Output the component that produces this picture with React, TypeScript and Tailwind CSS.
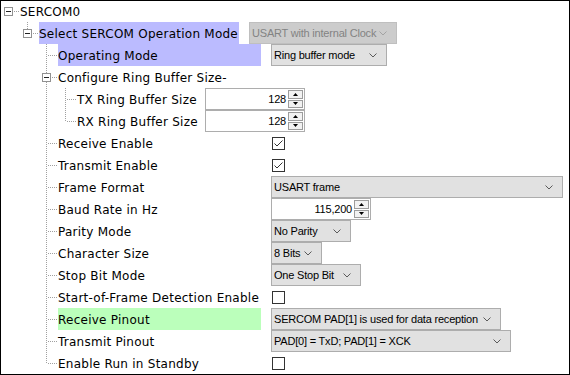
import React from "react";

type Ctrl =
  | { kind: "select"; text: string; w: number; disabled?: boolean }
  | { kind: "spin"; text: string; w: number }
  | { kind: "check"; on: boolean };

type Row = {
  label: string;
  level: number;
  open?: boolean;
  last?: boolean;
  pass: boolean[];
  hl?: "blue" | "green";
  lw?: number;
  ctrl?: Ctrl;
};

const rows: Row[] = [
  { label: "SERCOM0", level: 0, open: true, last: true, pass: [] },
  { label: "Select SERCOM Operation Mode", level: 1, open: true, last: true, pass: [false], hl: "blue", lw: 200, ctrl: { kind: "select", text: "USART with internal Clock", w: 148, disabled: true } },
  { label: "Operating Mode", level: 2, pass: [false, false], hl: "blue", lw: 203, ctrl: { kind: "select", text: "Ring buffer mode", w: 116 } },
  { label: "Configure Ring Buffer Size-", level: 2, open: true, pass: [false, false] },
  { label: "TX Ring Buffer Size", level: 3, pass: [false, false, true], lw: 118, ctrl: { kind: "spin", text: "128", w: 100 } },
  { label: "RX Ring Buffer Size", level: 3, last: true, pass: [false, false, true], lw: 118, ctrl: { kind: "spin", text: "128", w: 100 } },
  { label: "Receive Enable", level: 2, pass: [false, false], lw: 203, ctrl: { kind: "check", on: true } },
  { label: "Transmit Enable", level: 2, pass: [false, false], lw: 203, ctrl: { kind: "check", on: true } },
  { label: "Frame Format", level: 2, pass: [false, false], lw: 203, ctrl: { kind: "select", text: "USART frame", w: 292 } },
  { label: "Baud Rate in Hz", level: 2, pass: [false, false], lw: 203, ctrl: { kind: "spin", text: "115,200", w: 100 } },
  { label: "Parity Mode", level: 2, pass: [false, false], lw: 203, ctrl: { kind: "select", text: "No Parity", w: 80 } },
  { label: "Character Size", level: 2, pass: [false, false], lw: 203, ctrl: { kind: "select", text: "8 Bits", w: 51 } },
  { label: "Stop Bit Mode", level: 2, pass: [false, false], lw: 203, ctrl: { kind: "select", text: "One Stop Bit", w: 90 } },
  { label: "Start-of-Frame Detection Enable", level: 2, pass: [false, false], lw: 203, ctrl: { kind: "check", on: false } },
  { label: "Receive Pinout", level: 2, pass: [false, false], hl: "green", lw: 203, ctrl: { kind: "select", text: "SERCOM PAD[1] is used for data reception", w: 230 } },
  { label: "Transmit Pinout", level: 2, pass: [false, false], lw: 203, ctrl: { kind: "select", text: "PAD[0] = TxD; PAD[1] = XCK", w: 240 } },
  { label: "Enable Run in Standby", level: 2, last: true, pass: [false, false], lw: 203, ctrl: { kind: "check", on: false } },
];

const dot = "#a0a0a0";

// one 19px column of the tree guide
function Cell({ type, box, root }: { type: "empty" | "pass" | "tee" | "elbow"; box?: boolean; root?: boolean }) {
  return (
    <svg width="19" height="22" className="shrink-0" shapeRendering="crispEdges">
      {type === "pass" && <line x1="7.5" y1="0" x2="7.5" y2="22" stroke={dot} strokeDasharray="1 1" />}
      {(type === "tee" || type === "elbow") && !root && (
        <line x1="7.5" y1="0" x2="7.5" y2={box ? 7 : 11} stroke={dot} strokeDasharray="1 1" />
      )}
      {type === "tee" && <line x1="7.5" y1={box ? 16 : 12} x2="7.5" y2="22" stroke={dot} strokeDasharray="1 1" />}
      {(type === "tee" || type === "elbow") && (
        <line x1={box ? 13 : 9} y1="11.5" x2="19" y2="11.5" stroke={dot} strokeDasharray="1 1" />
      )}
      {box && (
        <>
          <rect x="3.5" y="7.5" width="8" height="8" fill="white" stroke="#919191" />
          <line x1="5" y1="11.5" x2="10" y2="11.5" stroke="#222" />
        </>
      )}
    </svg>
  );
}

function Chevron({ color = "#5a5a5a" }: { color?: string }) {
  return (
    <svg width="8" height="5" className="shrink-0">
      <polyline points="0.5,0.5 4,4 7.5,0.5" fill="none" stroke={color} strokeWidth="1" />
    </svg>
  );
}

function Select({ text, w, disabled }: { text: string; w: number; disabled?: boolean }) {
  return (
    <div
      style={{ width: w }}
      className={`flex h-[22px] items-center border pl-[2px] pr-[9px] ${
        disabled ? "border-[#bfbfbf] bg-[#cccccc] text-[#838383]" : "border-[#adadad] bg-[#e1e1e1] text-black"
      }`}
    >
      <span className="flex-1 overflow-hidden whitespace-nowrap">{text}</span>
      <Chevron color={disabled ? "#a3a3a3" : "#5a5a5a"} />
    </div>
  );
}

function Spin({ text, w }: { text: string; w: number }) {
  return (
    <div style={{ width: w }} className="flex h-[22px] border border-[#adadad] bg-white">
      <div className="flex flex-1 items-center justify-end pr-[2px]">{text}</div>
      <div className="flex w-[16px] flex-col gap-px py-px pr-px">
        <div className="flex flex-1 items-center justify-center border border-[#9c9c9c] bg-[#f2f2f2]">
          <svg width="5" height="3"><polygon points="2.5,0 5,3 0,3" fill="#000" /></svg>
        </div>
        <div className="flex flex-1 items-center justify-center border border-[#9c9c9c] bg-[#f2f2f2]">
          <svg width="5" height="3"><polygon points="0,0 5,0 2.5,3" fill="#000" /></svg>
        </div>
      </div>
    </div>
  );
}

function Check({ on }: { on: boolean }) {
  return (
    <div className="ml-px flex h-[13px] w-[13px] items-center justify-center border border-[#333] bg-white">
      {on && (
        <svg width="11" height="11">
          <polyline points="1.5,5.5 4,8 9.5,2.5" fill="none" stroke="#333" strokeWidth="1" />
        </svg>
      )}
    </div>
  );
}

export default function App() {
  return (
    <div className="h-[375px] w-[570px] border border-black bg-white font-['DejaVu_Sans',sans-serif] text-[12px] tracking-[0.25px] text-black">
      <div className="-mt-px flex flex-col">
        {rows.map((r, i) => (
          <div key={i} className="flex h-[22px] items-center">
            {r.pass.map((p, k) => (
              <Cell key={k} type={p ? "pass" : "empty"} />
            ))}
            <Cell type={r.last ? "elbow" : "tee"} box={r.open} root={r.level === 0} />
            <div
              style={r.lw ? { width: r.lw } : undefined}
              className={`flex h-full shrink-0 items-center whitespace-nowrap pt-px ${
                r.hl === "blue" ? "bg-[#bbbbff]" : r.hl === "green" ? "bg-[#bbffbb]" : ""
              }`}
            >
              {r.label}
            </div>
            {r.ctrl && (
              <div className="ml-[10px] flex items-center font-['Liberation_Sans',Arial,sans-serif] text-[11px] tracking-[-0.2px]">
                {r.ctrl.kind === "select" && <Select text={r.ctrl.text} w={r.ctrl.w} disabled={r.ctrl.disabled} />}
                {r.ctrl.kind === "spin" && <Spin text={r.ctrl.text} w={r.ctrl.w} />}
                {r.ctrl.kind === "check" && <Check on={r.ctrl.on} />}
              </div>
            )}
          </div>
        ))}
      </div>
    </div>
  );
}
